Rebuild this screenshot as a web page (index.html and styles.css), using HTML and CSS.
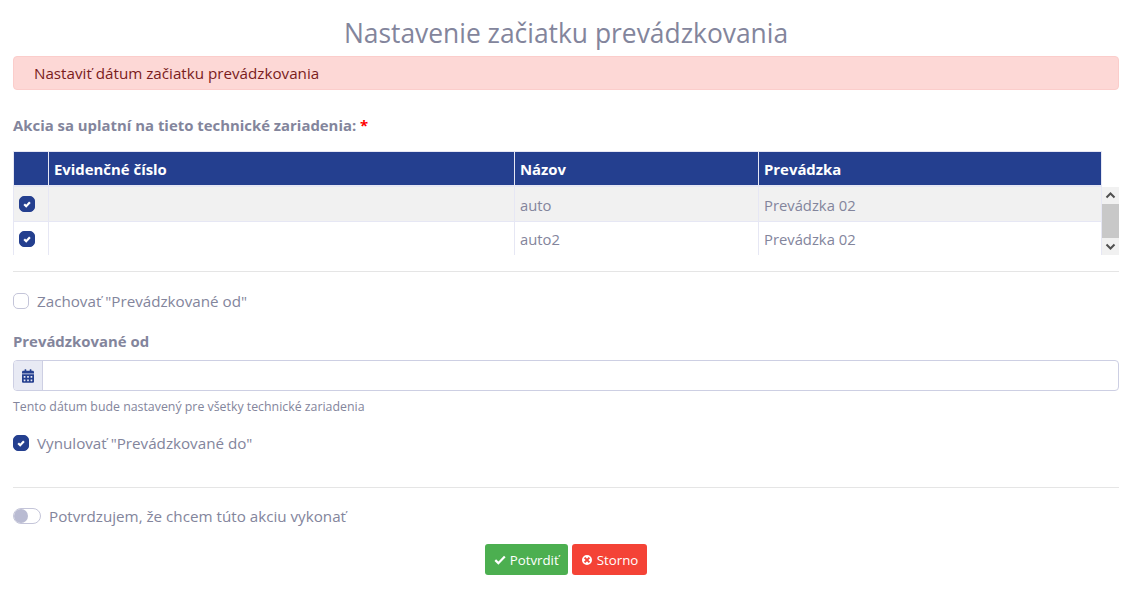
FILE: index.html
```html
<!DOCTYPE html>
<html lang="sk">
<head>
    <meta charset="UTF-8">
    <meta name="viewport" content="width=device-width, initial-scale=1.0">
    <title>Nastavenie začiatku prevádzkovania</title>
    <link rel="stylesheet" href="styles.css">
</head>
<body>
    <h1 class="title">Nastavenie začiatku prevádzkovania</h1>
    <div class="alert">Nastaviť dátum začiatku prevádzkovania</div>

    <div class="field-label devices-label">Akcia sa uplatní na tieto technické zariadenia: <span class="req">*</span></div>

    <div class="grid">
        <div class="grid-head">
            <div class="cell col-check"></div>
            <div class="cell col-num">Evidenčné číslo</div>
            <div class="cell col-name">Názov</div>
            <div class="cell col-place">Prevádzka</div>
        </div>
        <div class="grid-scroll">
            <div class="grid-body">
                <div class="grid-row odd">
                    <div class="cell col-check"><span class="check on small"><svg viewBox="0 0 14 14"><path d="M4.200 7.200l2 2 3.700-3.900" /></svg></span></div>
                    <div class="cell col-num"></div>
                    <div class="cell col-name">auto</div>
                    <div class="cell col-place">Prevádzka 02</div>
                </div>
                <div class="grid-row last">
                    <div class="cell col-check"><span class="check on small"><svg viewBox="0 0 14 14"><path d="M4.200 7.200l2 2 3.700-3.900" /></svg></span></div>
                    <div class="cell col-num"></div>
                    <div class="cell col-name">auto2</div>
                    <div class="cell col-place">Prevádzka 02</div>
                </div>
            </div>
            <div class="scrollbar">
                <svg class="arrow" viewBox="0 0 17 17"><path d="M4.500 10.500l4-4 4 4" /></svg>
                <div class="thumb"></div>
                <svg class="arrow" viewBox="0 0 17 17"><path d="M4.500 6.500l4 4 4-4" /></svg>
            </div>
        </div>
    </div>

    <hr class="rule rule-top">

    <label class="check-row keep-row"><span class="check"></span>Zachovať "Prevádzkované od"</label>

    <div class="field-label from-label">Prevádzkované od</div>
    <div class="date-input">
        <span class="date-addon">
            <svg viewBox="0 0 448 512"><path d="M0 464c0 26.500 21.500 48 48 48h352c26.500 0 48-21.500 48-48V192H0v272zm320-196c0-6.600 5.400-12 12-12h40c6.600 0 12 5.400 12 12v40c0 6.600-5.400 12-12 12h-40c-6.600 0-12-5.400-12-12v-40zm0 128c0-6.600 5.400-12 12-12h40c6.600 0 12 5.400 12 12v40c0 6.600-5.400 12-12 12h-40c-6.600 0-12-5.400-12-12v-40zM192 268c0-6.600 5.400-12 12-12h40c6.600 0 12 5.400 12 12v40c0 6.600-5.400 12-12 12h-40c-6.600 0-12-5.400-12-12v-40zm0 128c0-6.600 5.400-12 12-12h40c6.600 0 12 5.400 12 12v40c0 6.600-5.400 12-12 12h-40c-6.600 0-12-5.400-12-12v-40zM64 268c0-6.600 5.400-12 12-12h40c6.600 0 12 5.400 12 12v40c0 6.600-5.400 12-12 12H76c-6.600 0-12-5.400-12-12v-40zm0 128c0-6.600 5.400-12 12-12h40c6.600 0 12 5.400 12 12v40c0 6.600-5.400 12-12 12H76c-6.600 0-12-5.400-12-12v-40zM400 64h-48V16c0-8.800-7.200-16-16-16h-32c-8.800 0-16 7.200-16 16v48H160V16c0-8.800-7.200-16-16-16h-32c-8.800 0-16 7.200-16 16v48H48C21.500 64 0 85.500 0 112v48h448v-48c0-26.500-21.500-48-48-48z" /></svg>
        </span>
        <span class="date-value"></span>
    </div>
    <div class="hint">Tento dátum bude nastavený pre všetky technické zariadenia</div>

    <label class="check-row reset-row"><span class="check on"><svg viewBox="0 0 14 14"><path d="M4.200 7.200l2 2 3.700-3.900" /></svg></span>Vynulovať "Prevádzkované do"</label>

    <hr class="rule rule-bottom">

    <label class="switch-row"><span class="switch"><span class="knob"></span></span>Potvrdzujem, že chcem túto akciu vykonať</label>

    <div class="actions">
        <button class="btn btn-ok">
            <svg viewBox="0 0 14 12"><path d="M1.500 6.200l3.600 3.500 7.500-7.700" /></svg>Potvrdiť
        </button>
        <button class="btn btn-cancel">
            <svg viewBox="0 0 12 12"><circle cx="6" cy="6" r="6" fill="#fff" /><path d="M3.600 3.600l4.800 4.800M8.400 3.600l-4.800 4.800" /></svg>Storno
        </button>
    </div>
</body>
</html>
```

FILE: styles.css
```css
* {
    box-sizing: border-box;
}
body {
    margin: 0;
    padding: 0 15px 0 13px;
    background: #fff;
    color: #83859c;
    font-family: "Open Sans", "Noto Sans", sans-serif;
    font-size: 15.2px;
}
.title {
    margin: 0;
    padding-top: 14px;
    height: 56px;
    text-align: center;
    font-size: 26.4px;
    line-height: 38px;
    font-weight: 400;
}
.alert {
    height: 34px;
    padding-left: 20px;
    line-height: 32px;
    background: #fdd8d6;
    border: 1px solid #fbcdcb;
    border-radius: 4px;
    color: #7a1c1c;
}
.field-label {
    font-size: 14.9px;
    font-weight: 700;
    line-height: 20px;
}
.devices-label {
    margin-top: 25px;
}
.req {
    color: #f00;
}
.grid {
    margin-top: 16px;
}
.grid-head {
    display: flex;
    width: 1089px;
    height: 36px;
    background: #243f8f;
    border: 1px solid #e6e7f4;
    border-bottom-width: 2px;
    color: #fff;
    font-size: 14.9px;
    font-weight: 700;
    line-height: 35px;
}
.grid-head .cell {
    border-right: 1px solid #e6e7f4;
}
.grid-head .cell:last-child {
    border-right: 0;
}
.cell {
    padding-left: 5px;
    overflow: hidden;
}
.col-check {
    width: 35px;
}
.col-num {
    width: 466px;
}
.col-name {
    width: 244px;
}
.col-place {
    flex: 1;
}
.grid-scroll {
    display: flex;
    height: 68px;
}
.grid-body {
    width: 1089px;
    font-size: 14.8px;
}
.grid-row {
    display: flex;
    height: 35px;
    line-height: 37px;
    border-left: 1px solid #e6e7f4;
    border-right: 1px solid #e6e7f4;
    border-bottom: 1px solid #e6e7f4;
}
.grid-row.last {
    height: 33px;
    line-height: 35px;
    border-bottom: 0;
}
.grid-row.odd {
    background: #f1f1f1;
}
.grid-row .cell {
    border-right: 1px solid #e6e7f4;
}
.grid-row .cell:last-child {
    border-right: 0;
}
.grid-row .col-check {
    padding: 9px 0 0 5px;
    line-height: 0;
}
.scrollbar {
    display: flex;
    flex-direction: column;
    width: 17px;
    background: #f1f1f1;
}
.arrow {
    display: block;
    width: 17px;
    height: 17px;
    fill: none;
    stroke: #505050;
    stroke-width: 2;
}
.thumb {
    flex: 1;
    background: #c8c8c8;
}
.rule {
    margin: 0;
    border: 0;
    border-top: 1px solid #e5e5e5;
}
.rule-top {
    margin-top: 16px;
}
.rule-bottom {
    margin-top: 34px;
}
.check-row,
.switch-row {
    display: flex;
    align-items: center;
    line-height: 20px;
}
.keep-row {
    margin-top: 19px;
}
.reset-row {
    margin-top: 17px;
}
.check {
    display: inline-block;
    flex: none;
    width: 16px;
    height: 16px;
    margin-right: 8px;
    background: #fff;
    border: 1px solid #c4c5d9;
    border-radius: 5px;
}
.check.on {
    background: #243f8f;
    border-color: #243f8f;
}
.check.small {
    margin: 0;
}
.check svg {
    display: block;
    width: 14px;
    height: 14px;
    fill: none;
    stroke: #fff;
    stroke-width: 2.200;
}
.from-label {
    margin-top: 20px;
}
.date-input {
    display: flex;
    height: 31px;
    margin-top: 9px;
    background: #fff;
    border: 1px solid #cdcfe3;
    border-radius: 4px;
    overflow: hidden;
}
.date-addon {
    display: flex;
    align-items: center;
    justify-content: center;
    width: 29px;
    background: #e8eaf4;
    border-right: 1px solid #cdcfe3;
}
.date-addon svg {
    width: 12px;
    height: 14px;
    fill: #243f8f;
}
.hint {
    margin-top: 7px;
    font-size: 12.35px;
    line-height: 18px;
}
.switch-row {
    margin-top: 18px;
}
.switch {
    display: block;
    flex: none;
    width: 28px;
    height: 16px;
    margin-right: 8px;
    border: 1px solid #c4c5d9;
    border-radius: 8px;
}
.knob {
    display: block;
    width: 14px;
    height: 14px;
    background: #b9bbd2;
    border-radius: 50%;
}
.actions {
    display: flex;
    justify-content: center;
    gap: 4px;
    margin-top: 18px;
}
.btn {
    display: flex;
    align-items: center;
    height: 31px;
    padding: 0 9px;
    border: 0;
    border-radius: 3px;
    color: #fff;
    font-family: inherit;
    font-size: 13.3px;
}
.btn svg {
    width: 12px;
    height: 12px;
    margin-right: 4px;
    fill: none;
    stroke-width: 2.600;
}
.btn-ok {
    background: #4caf50;
}
.btn-ok svg {
    stroke: #fff;
}
.btn-cancel {
    background: #f44336;
}
.btn-cancel svg {
    stroke: #f44336;
    stroke-width: 2;
}
```
